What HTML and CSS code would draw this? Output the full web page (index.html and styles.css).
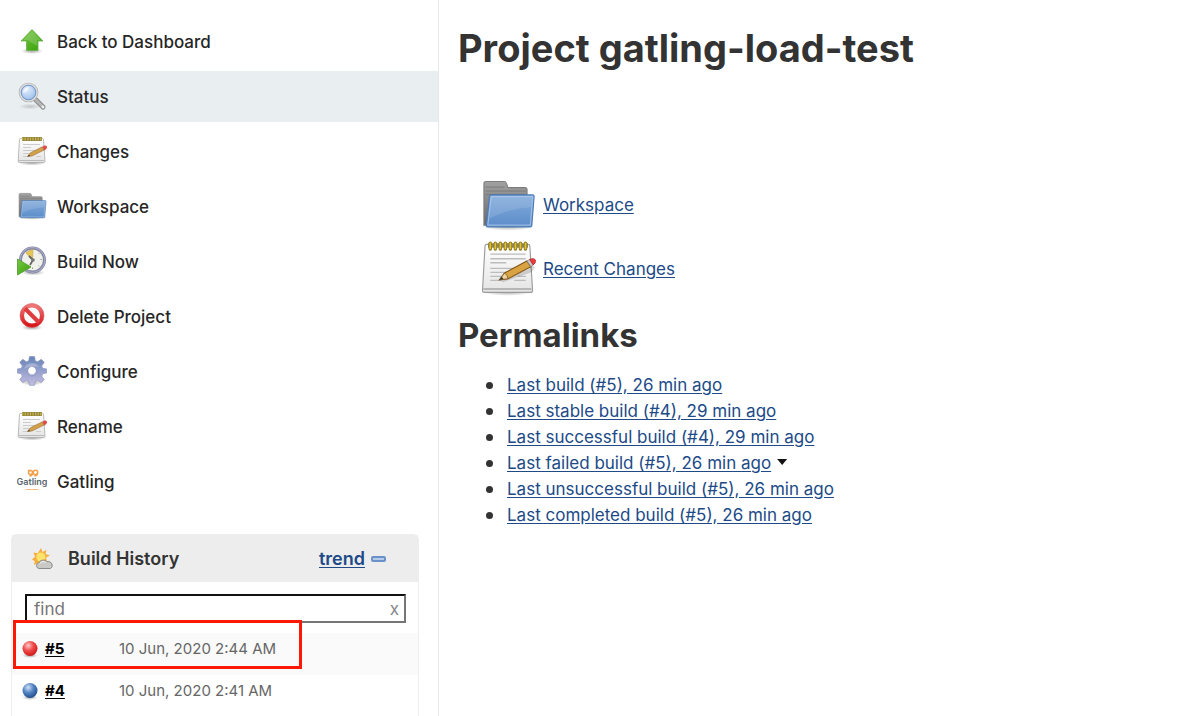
FILE: index.html
```html
<!DOCTYPE html>
<html lang="en">
<head>
    <meta charset="UTF-8" />
    <meta name="viewport" content="width=device-width, initial-scale=1" />
    <title>gatling-load-test [Jenkins]</title>
    <link rel="stylesheet" href="styles.css">
</head>
<body>

    <!-- Shared icons -->
    <svg class="icon-defs" width="0" height="0" aria-hidden="true">
        <defs>
            <linearGradient id="green" x1="0" y1="0" x2="1" y2="1">
                <stop offset="0" stop-color="#7ac843" />
                <stop offset="1" stop-color="#35a008" />
            </linearGradient>
            <linearGradient id="tab" x1="0" y1="0" x2="0" y2="1">
                <stop offset="0" stop-color="#a2a2a2" />
                <stop offset="1" stop-color="#686868" />
            </linearGradient>
            <linearGradient id="blue" x1="0" y1="0" x2="0" y2="1">
                <stop offset="0" stop-color="#82abdb" />
                <stop offset="1" stop-color="#5c8dc9" />
            </linearGradient>
            <linearGradient id="paper" x1="0" y1="0" x2="0" y2="1">
                <stop offset="0" stop-color="#ffffff" />
                <stop offset="1" stop-color="#e4e4e4" />
            </linearGradient>
            <linearGradient id="red" x1="0" y1="0" x2="0" y2="1">
                <stop offset="0" stop-color="#ef7777" />
                <stop offset="1" stop-color="#d8161b" />
            </linearGradient>
            <linearGradient id="steel" x1="0" y1="0" x2="0" y2="1">
                <stop offset="0" stop-color="#6583b7" />
                <stop offset="1" stop-color="#c3bde2" />
            </linearGradient>
            <radialGradient id="lens" cx="0.4" cy="0.3" r="0.8">
                <stop offset="0" stop-color="#e2eefc" />
                <stop offset="1" stop-color="#8fb6e8" />
            </radialGradient>
            <radialGradient id="ball-red" cx="0.38" cy="0.3" r="0.7">
                <stop offset="0" stop-color="#ffc9c9" />
                <stop offset="0.5" stop-color="#f04a4a" />
                <stop offset="1" stop-color="#cf1c1c" />
            </radialGradient>
            <radialGradient id="ball-blue" cx="0.38" cy="0.3" r="0.7">
                <stop offset="0" stop-color="#cfe0f4" />
                <stop offset="0.5" stop-color="#5585c4" />
                <stop offset="1" stop-color="#234f8f" />
            </radialGradient>
            <radialGradient id="shadow">
                <stop offset="0" stop-color="#000" stop-opacity="0.35" />
                <stop offset="1" stop-color="#000" stop-opacity="0" />
            </radialGradient>
        </defs>

        <symbol id="icon-folder" viewBox="-1 -3 50 50">
            <ellipse cx="24" cy="41" rx="24" ry="4" fill="url(#shadow)" />
            <path d="M2.500 40V3q0-2 2-2h16q1.500 0 2 1.500L24 6.500h15q2 0 2 2V40z" fill="url(#tab)" stroke="#7d7d7d" />
            <path d="M4 6h17M4 9.500h36M4 12.500h36" stroke="#777" stroke-width="0.800" />
            <path d="M9 13h37q1.500 0 1.300 1.500l-2 25.500q-.1 1.500-1.800 1.500H6q-1.500 0-1.400-1.500L7.500 14.500q.1-1.500 1.500-1.500z" fill="url(#blue)" stroke="#4b7ab6" />
            <path d="M9 14.500h37l-2 25.500H6z" fill="none" stroke="#b5cfee" stroke-opacity="0.700" />
            <path d="M9 15h36.500l-.8 9Q25 25 7.500 34z" fill="#fff" fill-opacity="0.120" />
        </symbol>

        <symbol id="icon-notepad" viewBox="-1 0 49 49">
            <ellipse cx="23" cy="44.500" rx="22" ry="3.500" fill="url(#shadow)" />
            <path d="M5 3h36q1.500 0 1.600 1.500L45 43q0 2-2 2H3q-2 0-1.800-2L3.400 4.500Q3.500 3 5 3z" fill="url(#paper)" stroke="#9b9b9b" />
            <path d="M2 42h42" stroke="#a6a6a6" stroke-width="1.200" />
            <path d="M8 11.500h31M8 15.500h31M8 19h14M8 24h22M8 27.500h17M8 31h11M32 31h7M8 34.500h10M29 34.500h10" stroke="#bcbcbc" stroke-width="1.200" />
            <path d="M6 4h35" stroke="#8d8664" stroke-width="4" />
            <path d="M8 2v5M12.400 2v5M16.800 2v5M21.200 2v5M25.600 2v5M30 2v5M34.400 2v5M38.800 2v5" stroke="#927a1a" stroke-width="3" stroke-linecap="round" />
            <path d="M8 2v4.500M12.400 2v4.500M16.800 2v4.500M21.200 2v4.500M25.600 2v4.500M30 2v4.500M34.400 2v4.500M38.800 2v4.500" stroke="#dfc43a" stroke-width="1.500" stroke-linecap="round" />
            <path d="M18 35l25-9 3-4" fill="none" stroke="#000" stroke-opacity="0.150" stroke-width="3" />
            <path d="M16 34l4.500-6L40 17.500l3.500 5L23.500 33z" fill="#d9a243" stroke="#805414" stroke-width="0.900" />
            <path d="M16 34l4.500-6q2.800 2 3 5z" fill="#ecd4a4" stroke="#805414" stroke-width="0.700" />
            <path d="M16 34l2-2.700 1.500 2z" fill="#333" />
            <path d="M40 17.500l3-1.600 3 4.700-2.500 1.900z" fill="#c9c9c9" stroke="#777" stroke-width="0.600" />
            <path d="M42.500 16.200q4-1.800 5 .6.500 2.500-2 4.100z" fill="#ee3b3b" stroke="#b32020" stroke-width="0.700" />
        </symbol>

        <symbol id="icon-notepad-small" viewBox="0 0 30 30">
            <ellipse cx="15" cy="27" rx="14" ry="2.500" fill="url(#shadow)" />
            <path d="M3.500 2.500h22q1 0 1 1L28 25q0 1.500-1.500 1.500h-24Q1 26.500 1.200 25L2.500 3.500q0-1 1-1z" fill="url(#paper)" stroke="#aaa" stroke-width="0.800" />
            <path d="M2 24.500h25" stroke="#bbb" />
            <path d="M6 8.500h17M6 11.500h8M6 14.500h13M6 17.500h8M6 20.500h6M19 20.500h5" stroke="#ccc" />
            <path d="M5 3h20" stroke="#8c8142" stroke-width="4" />
            <path d="M5 3h20" stroke="#cdb748" stroke-width="3" stroke-dasharray="1.300 1.300" />
            <path d="M10.500 20.500l3-3.700L25 11l2 3-12 6z" fill="#d5a24a" stroke="#94692b" stroke-width="0.600" />
            <path d="M10.500 20.500l1.500-2 1 1.400z" fill="#444" />
            <path d="M25.500 10.700q4-2 4.300.5 0 1.500-2.300 3z" fill="#e9493f" stroke="#ba5148" stroke-width="0.500" />
        </symbol>
    </svg>

    <div class="page">
        <aside class="side-panel">
            <nav class="tasks">
                <a href="#" class="task">
                    <svg class="task-icon" viewBox="0 0 30 30">
                        <ellipse cx="15" cy="25" rx="11" ry="3" fill="url(#shadow)" />
                        <path d="M15 3.500L26 15h-5v9.500H9.500V15H4z" fill="url(#green)" stroke="#6bb04f" stroke-width="0.800" />
                        <path d="M15 5l9 9.300h-4V20L10.500 14H6z" fill="#fff" fill-opacity="0.180" />
                    </svg>
                    Back to Dashboard
                </a>
                <a href="#" class="task active">
                    <svg class="task-icon" viewBox="0 0 30 30">
                        <ellipse cx="13" cy="25.500" rx="11" ry="3" fill="url(#shadow)" fill-opacity="0.500" />
                        <path d="M18 18l8 8" stroke="#888" stroke-width="5" stroke-linecap="round" />
                        <path d="M18 18l8 8" stroke="#b5b5b5" stroke-width="3" stroke-linecap="round" />
                        <path d="M25.700 25.700l.4.400" stroke="#eee" stroke-width="2.500" stroke-linecap="round" />
                        <circle cx="11.500" cy="11.500" r="8.500" fill="url(#lens)" stroke="#adadad" stroke-width="2.600" />
                        <circle cx="11.500" cy="11.500" r="8.500" fill="none" stroke="#dedede" stroke-width="1.400" />
                        <circle cx="11.500" cy="11.500" r="7.200" fill="none" stroke="#6893cf" stroke-width="0.900" />
                        <path d="M6 12q0-5.500 6-6-1 5-6 6z" fill="#fff" fill-opacity="0.600" />
                    </svg>
                    Status
                </a>
                <a href="#" class="task">
                    <svg class="task-icon"><use href="#icon-notepad-small" /></svg>
                    Changes
                </a>
                <a href="#" class="task">
                    <svg class="task-icon"><use href="#icon-folder" /></svg>
                    Workspace
                </a>
                <a href="#" class="task">
                    <svg class="task-icon" viewBox="0 0 30 30">
                        <ellipse cx="16" cy="26.500" rx="12" ry="3" fill="url(#shadow)" />
                        <circle cx="15.500" cy="14" r="12" fill="#f1f1ec" stroke="#83859f" stroke-width="3" />
                        <circle cx="15.500" cy="14" r="12.300" fill="none" stroke="#a5a7c6" stroke-width="1.200" />
                        <path d="M15.500 14L9 7q3-3 7-3.500z" fill="#e6c755" stroke="#b39a35" stroke-width="0.500" />
                        <path d="M12 10l4 4-3 5" fill="none" stroke="#666" stroke-width="1.800" />
                        <circle cx="16" cy="14" r="1.800" fill="#777" />
                        <path d="M23.500 13.500h1.500M15.500 21.500v1.500M21.500 8l.8-.8M21.500 19.500l.8.800" stroke="#999" />
                        <path d="M0.500 13v16L14 21z" fill="url(#green)" stroke="#5ba23a" stroke-width="0.900" />
                    </svg>
                    Build Now
                </a>
                <a href="#" class="task">
                    <svg class="task-icon" viewBox="0 0 30 30">
                        <ellipse cx="15" cy="26.500" rx="11" ry="3" fill="url(#shadow)" />
                        <circle cx="15" cy="14.500" r="10" fill="#fafafa" stroke="url(#red)" stroke-width="4" />
                        <path d="M8 7.500l14 14" stroke="#df3b3f" stroke-width="4" />
                        <circle cx="15" cy="14.500" r="12" fill="none" stroke="#d15a5a" stroke-width="0.600" />
                    </svg>
                    Delete Project
                </a>
                <a href="#" class="task">
                    <svg class="task-icon" viewBox="0 0 30 30">
                        <ellipse cx="15" cy="26" rx="12" ry="3.500" fill="url(#shadow)" />
                        <path fill-rule="evenodd" d="M12.500.500h5l.8 4.300 2.300 1 3.600-2.500 3 3-2.500 3.700 1 2.300 4 .7v4l-4 .8-1 2.300 2.500 3.600-3 3-3.600-2.400-2.300 1-.8 4h-5l-.8-4-2.300-1-3.600 2.400-3-3 2.500-3.600-1-2.300-4-.8v-4l4-.7 1-2.300-2.500-3.700 3-3 3.600 2.500 2.300-1zM15 10.500a4.200 4.200 0 1 0 0 8.400 4.200 4.200 0 0 0 0-8.400z" fill="url(#steel)" stroke="#8b96bd" stroke-width="0.700" />
                        <circle cx="15" cy="14.700" r="5.300" fill="none" stroke="#979ec8" />
                        <path d="M7 13q2-6 8-6 5 0 7 4-9-2-15 2z" fill="#fff" fill-opacity="0.250" />
                    </svg>
                    Configure
                </a>
                <a href="#" class="task">
                    <svg class="task-icon"><use href="#icon-notepad-small" /></svg>
                    Rename
                </a>
                <a href="#" class="task">
                    <svg class="task-icon" viewBox="0 0 30 30" aria-hidden="true">
                        <g fill="none" stroke="#f2a04a" stroke-width="1.500">
                            <circle cx="13.500" cy="6.500" r="2" />
                            <circle cx="18.500" cy="6.500" r="2.200" />
                            <path d="M11 4.500h3M20.500 7q0 3-3 3M15.500 7q0 3-3 3" />
                        </g>
                        <text x="15" y="19" class="logo-text">Gatling</text>
                        <path d="M8.500 23.500h13" stroke="#f6bd84" />
                    </svg>
                    Gatling
                </a>
            </nav>

            <section class="history">
                <div class="history-header">
                    <svg class="weather" viewBox="0 0 22 22">
                        <path d="M9 0l1.500 4 4-2-1 4 4.500 1.500-4 2 1 4-10 2-3 1.500.8-3.800L0 11.500l3-2.800-1.500-4.200 4.300.8z" fill="#f5ad3e" />
                        <circle cx="8.800" cy="9" r="4.800" fill="#ffe36a" stroke="#f3b94a" stroke-width="0.700" />
                        <path d="M7 20.500q-2.500-.3-2.500-3t3-3q.5-2.500 3.500-2.500 2.500 0 3.500 1.500 4-.5 5.500 2.300 1 3.500-1.500 4.700z" fill="#c9c9c6" stroke="#8b8b88" />
                        <path d="M7.500 16q1-2.500 3.500-2.500 2 0 3 1.500" fill="none" stroke="#f2f2f2" />
                    </svg>
                    <h3>Build History</h3>
                    <a href="#" class="trend">trend</a>
                    <button class="collapse" type="button" aria-label="Collapse"></button>
                </div>
                <div class="search">
                    <input type="text" placeholder="find" aria-label="find">
                    <button class="clear" type="button" aria-label="Clear">x</button>
                </div>
                <div class="builds">
                    <table>
                        <tr>
                            <td class="ball">
                                <svg viewBox="0 0 18 18"><ellipse cx="9" cy="15.500" rx="8" ry="2.500" fill="url(#shadow)" /><circle cx="9" cy="8.500" r="7.500" fill="url(#ball-red)" /></svg>
                            </td>
                            <td class="number"><a href="#">#5</a></td>
                            <td class="date">10 Jun, 2020 2:44 AM</td>
                        </tr>
                        <tr>
                            <td class="ball">
                                <svg viewBox="0 0 18 18"><ellipse cx="9" cy="15.500" rx="8" ry="2.500" fill="url(#shadow)" /><circle cx="9" cy="8.500" r="7.500" fill="url(#ball-blue)" /></svg>
                            </td>
                            <td class="number"><a href="#">#4</a></td>
                            <td class="date">10 Jun, 2020 2:41 AM</td>
                        </tr>
                    </table>
                    <div class="highlight"></div>
                </div>
            </section>
        </aside>

        <main class="main-panel">
            <h1>Project gatling-load-test</h1>

            <div class="shortcuts">
                <div class="shortcut">
                    <svg><use href="#icon-folder" /></svg>
                    <a href="#">Workspace</a>
                </div>
                <div class="shortcut">
                    <svg><use href="#icon-notepad" /></svg>
                    <a href="#">Recent Changes</a>
                </div>
            </div>

            <h2>Permalinks</h2>
            <ul class="permalinks">
                <li><a href="#">Last build (#5), 26 min ago</a></li>
                <li><a href="#">Last stable build (#4), 29 min ago</a></li>
                <li><a href="#">Last successful build (#4), 29 min ago</a></li>
                <li><a href="#">Last failed build (#5), 26 min ago</a><button class="menu-arrow" type="button" aria-label="Open menu"></button></li>
                <li><a href="#">Last unsuccessful build (#5), 26 min ago</a></li>
                <li><a href="#">Last completed build (#5), 26 min ago</a></li>
            </ul>
        </main>
    </div>

</body>
</html>
```

FILE: styles.css
```css
* {
    box-sizing: border-box;
    margin: 0;
    padding: 0;
}

body {
    font-family: Inter, "Liberation Sans", sans-serif;
    font-size: 17px;
    line-height: 26px;
    background-color: #fff;
    color: #333;
}

a {
    color: #204a87;
    text-underline-offset: 2px;
}

button {
    border: none;
    background: none;
    font-family: inherit;
    cursor: pointer;
}

.icon-defs {
    position: absolute;
}

.page {
    display: flex;
    min-height: 100vh;
}

/* Side panel */
.side-panel {
    width: 439px;
    flex-shrink: 0;
    padding-top: 16px;
    border-right: 1px solid #e6e9eb;
}

.tasks {
    display: flex;
    flex-direction: column;
    gap: 4px;
}

.task {
    display: flex;
    align-items: center;
    gap: 10px;
    height: 51px;
    padding-left: 17px;
    color: #262626;
    font-weight: 500;
    text-decoration: none;
}

    .task.active {
        background-color: #e9eef1;
    }

.task-icon {
    width: 30px;
    height: 30px;
    margin-bottom: 2px;
}

.logo-text {
    font-size: 9px;
    font-weight: 600;
    text-anchor: middle;
    fill: #58666e;
}

/* Build history */
.history {
    margin: 27px 19px 0 11px;
    border: 1px solid #eee;
    border-bottom: none;
    border-radius: 6px 6px 0 0;
}

.history-header {
    display: flex;
    align-items: center;
    height: 47px;
    padding: 0 32px 0 20px;
    background-color: #ededed;
}

    .history-header h3 {
        margin-left: 14px;
        font-size: 18px;
        font-weight: 600;
    }

.weather {
    width: 22px;
    height: 22px;
}

.trend {
    margin-left: auto;
    font-size: 18px;
    font-weight: 600;
}

.collapse {
    width: 15px;
    height: 6px;
    margin-left: 6px;
    border: 2px solid #6b92c8;
    border-radius: 2px;
    background-color: #b4cbe9;
}

.search {
    position: relative;
    padding: 12px 12px 10px 13px;
}

    .search input {
        display: block;
        width: 100%;
        height: 29px;
        padding: 0 28px 0 7px;
        border: 2px solid;
        border-color: #111 #767676 #767676 #111;
        font: inherit;
        color: #333;
    }

    .search input::placeholder {
        color: #757575;
    }

.clear {
    position: absolute;
    top: 14px;
    right: 19px;
    font-size: 17px;
    line-height: 26px;
    color: #888;
}

.builds {
    position: relative;
}

    .builds table {
        width: 100%;
        border-collapse: collapse;
        font-size: 15px;
    }

    .builds tr:first-child {
        background-color: #fafafa;
    }

    .builds td {
        padding: 3px 0 13px;
        vertical-align: middle;
    }

    .builds tr:last-child td {
        padding-bottom: 12px;
    }

    .builds .ball {
        width: 33px;
        padding-left: 9px;
    }

    .builds .ball svg {
        display: block;
        width: 18px;
        height: 18px;
    }

    .builds .number {
        width: 74px;
        font-weight: 700;
    }

    .builds .number a {
        color: #000;
    }

    .builds .date {
        color: #666;
    }

.highlight {
    position: absolute;
    top: -13px;
    left: 1px;
    width: 289px;
    height: 49px;
    border: 3px solid #fb1905;
    pointer-events: none;
}

/* Main panel */
.main-panel {
    flex: 1;
    padding: 24px 19px;
}

    .main-panel h1 {
        font-size: 38px;
        line-height: 48px;
        font-weight: 700;
    }

    .main-panel h2 {
        margin-top: 12px;
        font-size: 33px;
        line-height: 44px;
        font-weight: 700;
    }

.shortcuts {
    padding: 101px 0 0 22px;
}

.shortcut {
    display: flex;
    align-items: center;
    gap: 7px;
    height: 64px;
}

    .shortcut svg {
        width: 56px;
        height: 56px;
    }

.permalinks {
    margin-top: 15px;
    padding-left: 28px;
    list-style: none;
}

    .permalinks li {
        display: flex;
        align-items: center;
    }

    .permalinks li::before {
        content: "";
        width: 7px;
        height: 7px;
        margin-right: 14px;
        border-radius: 50%;
        background-color: #333;
    }

.menu-arrow {
    width: 10px;
    height: 6px;
    margin: 0 0 2px 6px;
    background-color: #111;
    clip-path: polygon(0 0, 100% 0, 50% 100%);
}
```
